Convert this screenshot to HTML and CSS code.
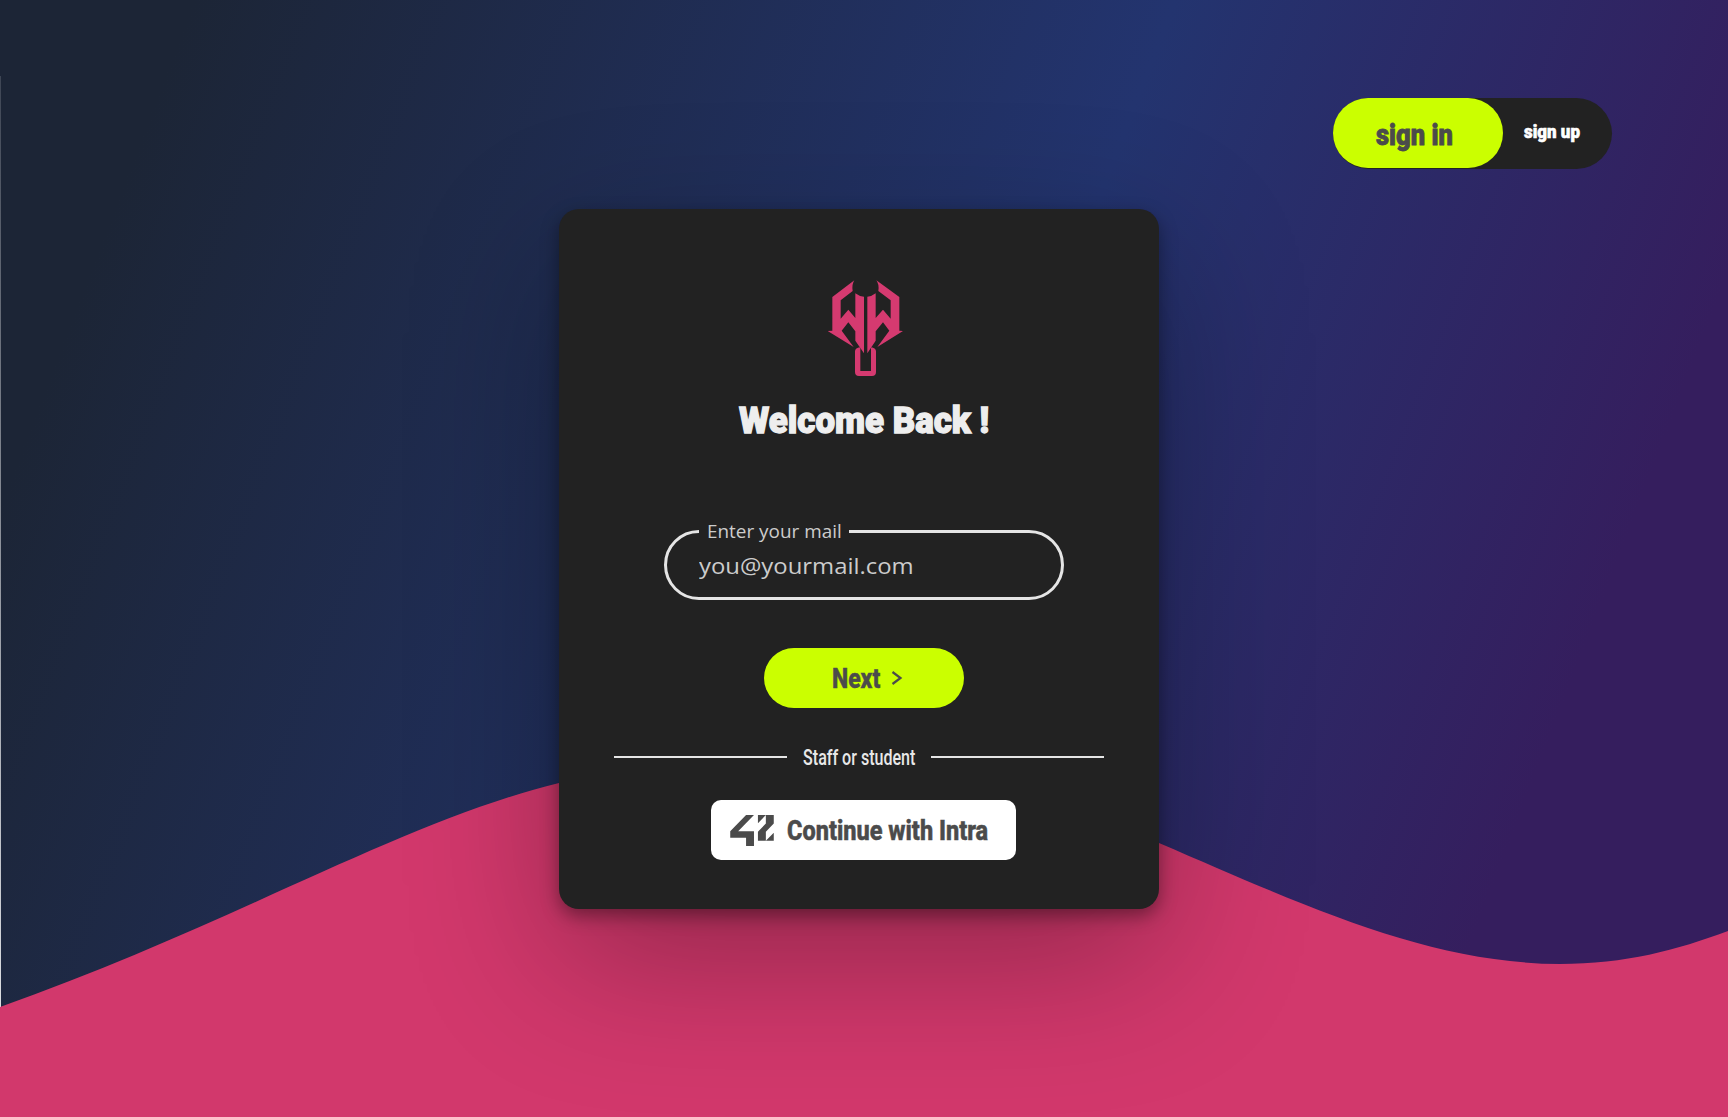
FILE: index.html
```html
<!DOCTYPE html>
<html lang="en">
<head>
<meta charset="utf-8">
<title>Sign in</title>
<link rel="stylesheet" href="styles.css">
</head>
<body>
<div class="edge"></div>
<svg class="wave" viewBox="0 0 1728 1117" aria-hidden="true">
  <path d="M0 1007C230 926 400 822 559 783C760 738 930 745 1159 843C1310 908 1428 963 1560 964C1625 964 1677 950 1728 931V1117H0Z" fill="#d2386c"/>
</svg>
<header class="top">
  <nav class="switch">
    <a class="signin"><span class="fit">sign in</span></a>
    <a class="signup"><span class="fit">sign up</span></a>
  </nav>
</header>
<main class="card">
  <svg class="logo" viewBox="0 0 330 345" aria-hidden="true">
    <g fill="#d53a70">
      <path d="M133 31L67 81V182L53 183L131 231L95 182L115 157L136 184V212L162 250V80Q147 79 136 70V144L115 119L92 146V91L128 63Q125 43 133 31Z"/>
      <path d="M199 31L268 81V182L279 183L202 231L238 182L219 157L197 184V212L172 250V80Q186 79 197 70V144L219 119L242 146V91L205 63Q208 43 199 31Z"/>
      <path d="M148 232Q135 235 135 244V306Q135 318 147 318H186Q198 318 198 306V244Q198 235 185 232L183 234V303H151V234Z"/>
    </g>
  </svg>
  <h1 class="title"><span class="fit">Welcome Back !</span></h1>
  <fieldset class="field">
    <legend><span class="fit">Enter your mail</span></legend>
    <span class="fit placeholder">you@yourmail.com</span>
  </fieldset>
  <button class="next"><span class="fit">Next</span>
    <svg viewBox="0 0 12 14" aria-hidden="true"><path d="M1.5 1L9.5 7L1.5 13" fill="none" stroke="#4b4b4b" stroke-width="2.2"/></svg>
  </button>
  <div class="divider"><i></i><span class="fit">Staff or student</span><i></i></div>
  <button class="intra">
    <svg viewBox="0 0 132 94" aria-hidden="true"><path fill="#4b4b4b" d="M48 0H72L24 49H72V94H48V69H0V49ZM84 0H108L84 25ZM108 0H132V26L108 51V78H84V51L108 26ZM132 54V78H108Z"/></svg>
    <span class="fit">Continue with Intra</span>
  </button>
</main>
</body>
</html>
```
FILE: styles.css
```css
* { box-sizing: border-box; }
body {
  margin: 0;
  width: 1728px;
  height: 1117px;
  overflow: hidden;
  position: relative;
  font-family: Roboto, "Liberation Sans", sans-serif;
  background: linear-gradient(111deg, #1c2536 9%, #23346f 54.5%, #351e5e 85%);
}
button { border: 0; margin: 0; padding: 0; font: inherit; }
.fit { display: block; white-space: nowrap; transform-origin: 0 50%; }
.edge { position: absolute; left: 0; top: 76px; width: 1px; height: 940px; background: linear-gradient(rgba(255, 255, 255, .15), rgba(255, 255, 255, .85)); }
.wave { position: absolute; inset: 0; width: 1728px; height: 1117px; }

.top { position: relative; display: flex; justify-content: flex-end; padding: 98px 116px 0 0; height: 209px; }
.switch { display: flex; width: 279px; height: 71px; border-radius: 36px; background: #222; font-weight: 900; }
.signin { width: 170px; height: 70px; border-radius: 35px; background: #cbff00; color: #4b4b4b; padding: 20px 0 0 43px; font-size: 29px; line-height: 34px; -webkit-text-stroke: .8px #4b4b4b; }
.signin .fit { transform: scaleX(.88); }
.signup { color: #fff; padding: 23px 0 0 21px; font-size: 18px; line-height: 22px; -webkit-text-stroke: .6px #fff; }
.signup .fit { transform: scaleX(.94); }

.card {
  position: relative;
  width: 600px;
  height: 700px;
  margin-left: 559px;
  border-radius: 20px;
  background: #222;
  box-shadow: 0 7px 18px rgba(0, 0, 0, .38), 0 50px 150px rgba(0, 0, 0, .3);
}
.logo { display: block; width: 110px; height: 115px; margin-left: 251px; position: relative; top: 61px; }
.title { margin: 77px 0 0 180px; color: #eee; font-weight: 900; font-size: 36px; line-height: 40px; -webkit-text-stroke: 1.3px #eee; }
.title .fit { transform: scaleX(.968); }
.field {
  width: 400px;
  height: 78px;
  margin: 81px 0 0 105px;
  padding: 0 0 0 32px;
  border: 3px solid #e5e5e5;
  border-radius: 35px;
  color: #ccc;
  font-family: "Open Sans", sans-serif;
}
.field legend { width: 150px; height: 19px; padding: 0 0 0 8px; font-size: 18px; line-height: 18px; }
.field legend .fit { transform: scaleX(1.05); }
.placeholder { font-size: 22px; line-height: 30px; margin-top: 9px; transform: scaleX(1.085); }
.next { display: flex; align-items: center; width: 200px; height: 60px; margin: 48px 0 0 205px; padding-left: 68px; border-radius: 30px; background: #cbff00; color: #4b4b4b; font-size: 28px; font-weight: 800; text-align: left; }
.next .fit { width: 59px; transform: scaleX(.82); -webkit-text-stroke: .5px #4b4b4b; }
.next svg { width: 12px; height: 14px; }
.divider { display: flex; align-items: center; height: 30px; margin: 34px 0 0 55px; color: #e8e8e8; font-size: 22px; font-weight: 500; }
.divider i { width: 173px; height: 2px; background: #e5e5e5; }
.divider .fit { width: 144px; padding-left: 22px; transform: scaleX(.73); }
.intra { display: flex; align-items: center; width: 305px; height: 60px; margin: 28px 0 0 152px; padding-left: 19px; border-radius: 10px; background: #fff; color: #4b4b4b; font-size: 28px; font-weight: 800; }
.intra svg { width: 44px; height: 31px; margin-right: 13px; flex: none; }
.intra .fit { transform: scaleX(.84); -webkit-text-stroke: .5px #4b4b4b; }
```
